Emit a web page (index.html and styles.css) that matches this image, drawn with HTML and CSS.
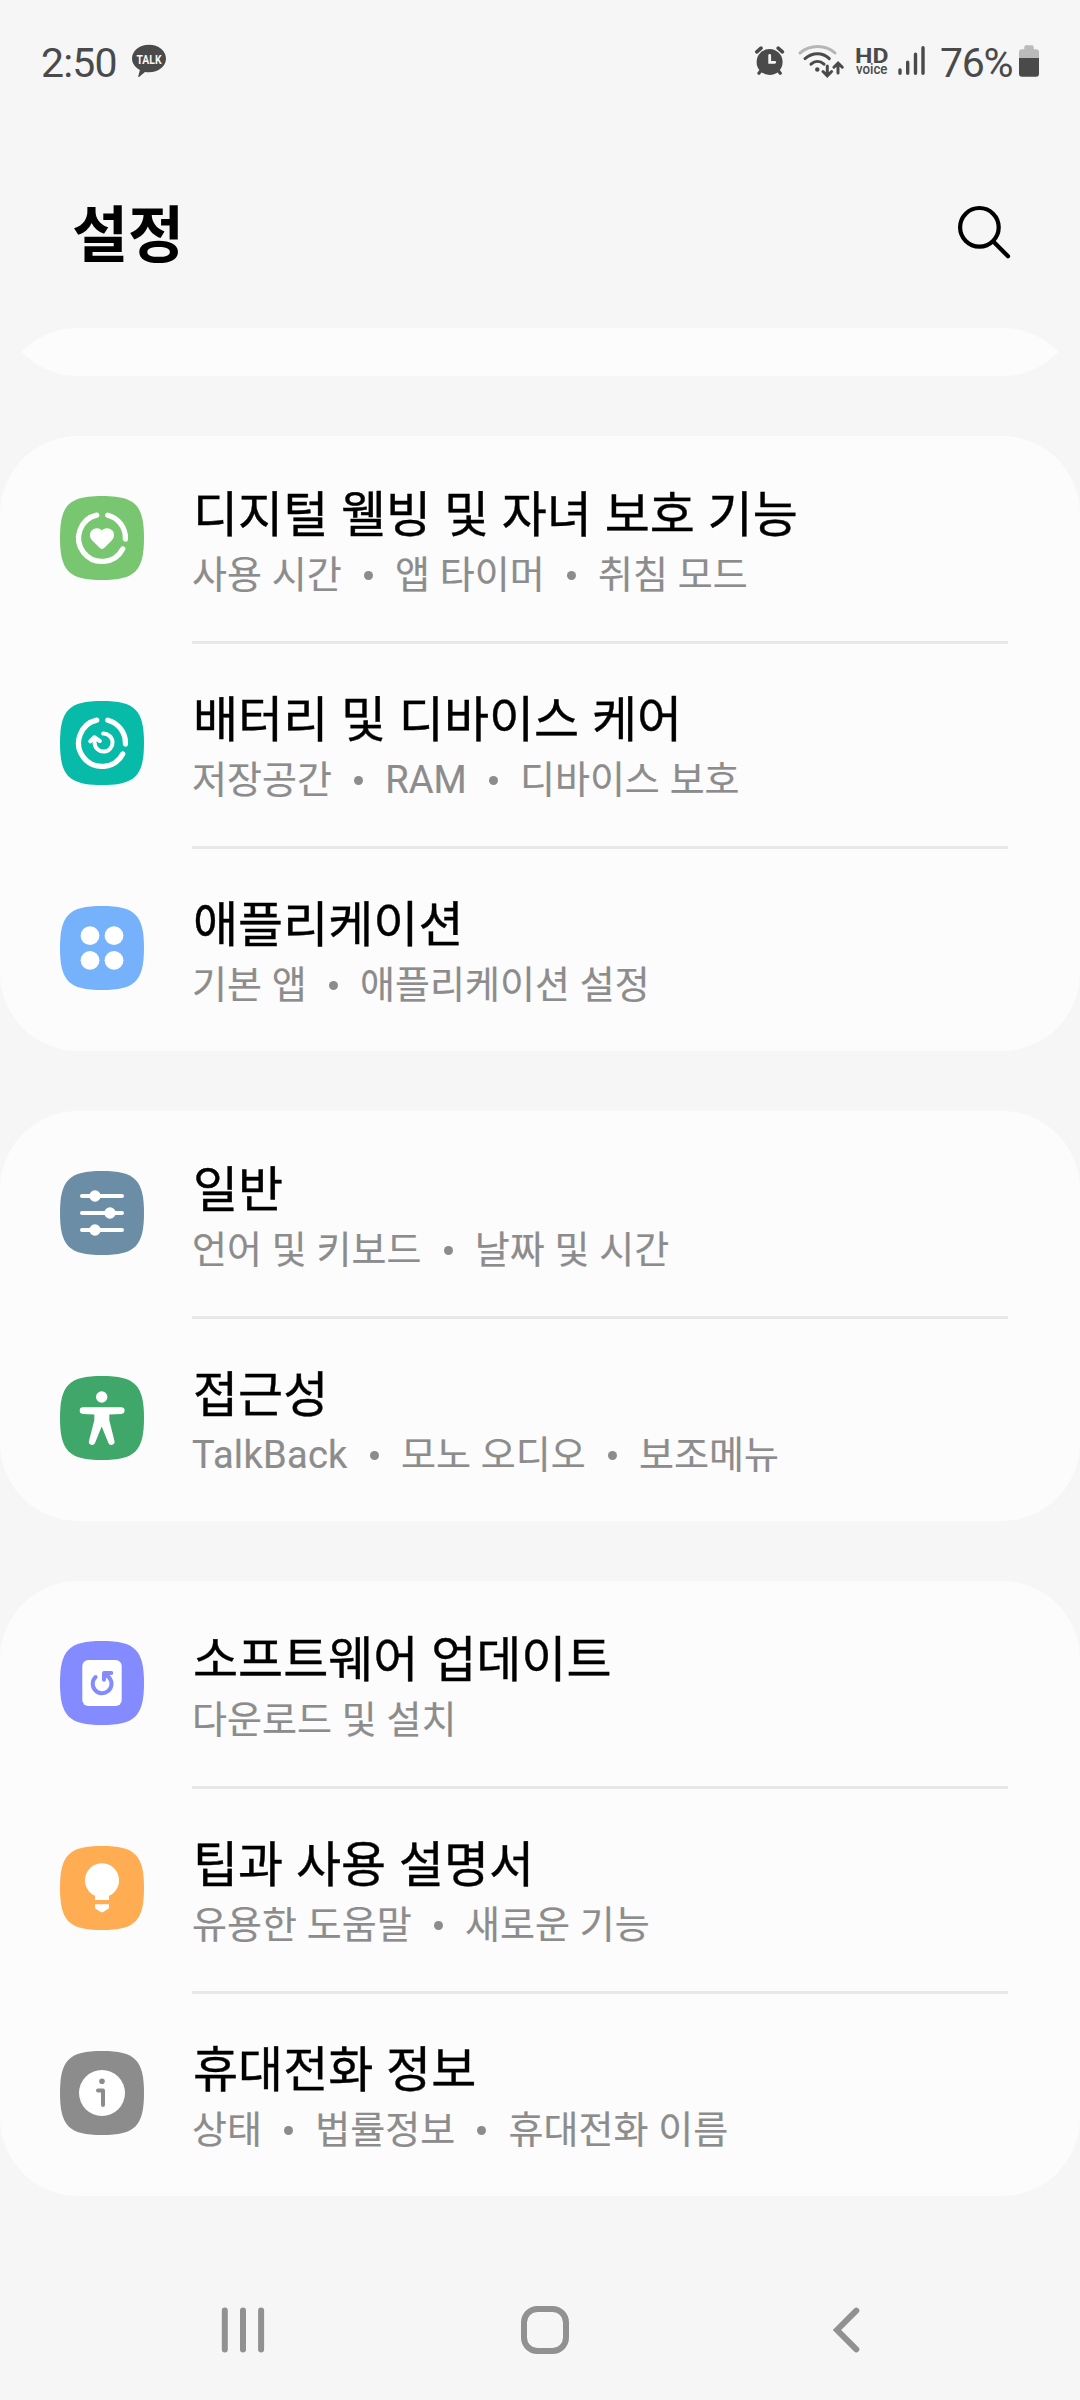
FILE: index.html
```html
<!DOCTYPE html>
<html lang="ko">
<head>
<meta charset="utf-8">
<title>설정</title>
<link rel="stylesheet" href="styles.css">
</head>
<body>
<div class="screen">
  <div class="status-bar">
    <span class="clock">2:50</span>
    <svg class="talk" width="36" height="40" viewBox="131 40 36 40"><path d="M149 44.7c9.5 0 17 6.100 17 13.800s-7.500 13.800-17 13.800c-1.500 0-2.600-.1-4-.4L139 77c-.6.300-1 0-.8-.6l1.700-6.400c-4.800-2.600-7.900-6.800-7.900-11.500 0-7.700 7.500-13.800 17-13.800z" fill="#4a4a4a"/><text class="talk-text" x="149" y="63.600" text-anchor="middle" textLength="25" lengthAdjust="spacingAndGlyphs">TALK</text></svg>
    <div class="indicators">
      <svg width="32" height="40" viewBox="754 40 32 40" fill="none" stroke="#4a4a4a" stroke-linecap="round"><circle cx="769.600" cy="62" r="13" fill="#4a4a4a" stroke="none"/><path d="M756.800 51.800l4.200-3.600M782.400 51.800l-4.200-3.600" stroke-width="3.600"/><path d="M761.500 70l-2.600 3.300M777.700 70l2.600 3.300" stroke-width="3.200"/><path d="M769.700 55.500v6.800h5" stroke="#f6f6f6" stroke-width="2.800"/></svg>
      <svg class="wifi" width="48" height="40" viewBox="797 40 48 40" fill="none" stroke="#4a4a4a" stroke-width="3" stroke-linecap="round"><path d="M800 53c10-8.600 25.500-8.600 35 0" stroke="#b6b6b6"/><path d="M805 58.600c7.500-6.600 17.500-6.600 24.300 0M811 64.200c4-3.600 9-3.600 13 0"/><circle cx="817.300" cy="69.500" r="2.200" fill="#4a4a4a" stroke="none"/><path d="M827.300 66v9.500M823 71.500l4.300 4.300 4.300-4.300M838 73v-9.500M833.900 67.200l4.200-4.200 4.200 4.200"/></svg>
      <svg class="volte" width="34" height="40" viewBox="855 40 34 40"><text class="hd" x="855" y="62.600" textLength="33.500" lengthAdjust="spacingAndGlyphs">HD</text><text class="voice" x="856" y="73.800" textLength="31.500" lengthAdjust="spacingAndGlyphs">voice</text></svg>
      <svg class="signal" width="28" height="40" viewBox="898 40 28 40" stroke="#4a4a4a" stroke-width="3.400" stroke-linecap="round"><path d="M900 70v3.300M907.700 62.300v11M915.500 54.300v19M923 47.700v25.600"/></svg>
      <span class="percent">76%</span>
      <svg class="battery" width="22" height="40" viewBox="1018 40 22 40"><path d="M1026 45.300h6q1.700 0 1.700 1.700v2.300h2.300q3 0 3 3V58h-20v-5.700q0-3 3-3h2.300V47q0-1.700 1.700-1.700z" fill="#bababa"/><path d="M1019 58h20v15.700q0 3-3 3h-14q-3 0-3-3z" fill="#4a4a4a"/></svg>
    </div>
  </div>

  <header class="app-bar">
    <h1>설정</h1>
    <svg width="60" height="60" viewBox="954 200 60 60" fill="none" stroke="#000" stroke-width="4.200" stroke-linecap="round"><circle cx="979.400" cy="227.300" r="19.300"/><path d="M993.300 241.500l14.700 14.800"/></svg>
  </header>

  <main class="list">
    <section class="card-edge"></section>

    <section class="card">
      <div class="row">
        <svg class="icon wellbeing" viewBox="0 0 84 84"><path class="tile" d="M0 42C0 9 9 0 42 0s42 9 42 42-9 42-42 42S0 75 0 42z"/><path class="line ring" d="M36.700 19.200A23.400 23.400 0 1 0 62.700 52.900M47.800 19.200A23.400 23.400 0 0 1 65.400 43"/><path class="solid" d="M42 53c-1 0-1.700-.5-2.400-1.200l-7.300-7.300c-3-3.100-3.100-7.400-.4-10.200 2.800-2.900 7.500-2.900 10.100.3 2.600-3.200 7.300-3.200 10.100-.3 2.700 2.800 2.600 7.100-.4 10.200l-7.300 7.300c-.7.700-1.400 1.200-2.400 1.200z"/></svg>
        <div class="text"><div class="title">디지털 웰빙 및 자녀 보호 기능</div><div class="sub">사용 시간<i></i>앱 타이머<i></i>취침 모드</div></div>
      </div>
      <div class="row">
        <svg class="icon care" viewBox="0 0 84 84"><path class="tile" d="M0 42C0 9 9 0 42 0s42 9 42 42-9 42-42 42S0 75 0 42z"/><path class="line ring" d="M36.700 19.200A23.400 23.400 0 1 0 62.700 52.900M47.800 19.200A23.400 23.400 0 0 1 65.400 43"/><path class="line" stroke-width="4" d="M43.200 32.600A9 9 0 1 1 34.600 42.500L34.300 37M30.200 40.400L34.300 36.200L39.800 40"/></svg>
        <div class="text"><div class="title">배터리 및 디바이스 케어</div><div class="sub">저장공간<i></i>RAM<i></i>디바이스 보호</div></div>
      </div>
      <div class="row">
        <svg class="icon apps" viewBox="0 0 84 84"><path class="tile" d="M0 42C0 9 9 0 42 0s42 9 42 42-9 42-42 42S0 75 0 42z"/><g class="solid"><circle cx="30" cy="29.700" r="9.400"/><circle cx="54" cy="29.700" r="9.400"/><circle cx="30" cy="54.300" r="9.400"/><circle cx="54" cy="54.300" r="9.400"/></g></svg>
        <div class="text"><div class="title">애플리케이션</div><div class="sub">기본 앱<i></i>애플리케이션 설정</div></div>
      </div>
    </section>

    <section class="card">
      <div class="row">
        <svg class="icon general" viewBox="0 0 84 84"><path class="tile" d="M0 42C0 9 9 0 42 0s42 9 42 42-9 42-42 42S0 75 0 42z"/><path class="line" stroke-width="4" d="M22 25h40M22 42h40M22 59h40"/><g class="solid"><circle cx="35" cy="25" r="5.700"/><circle cx="50" cy="42" r="5.700"/><circle cx="35" cy="59" r="5.700"/></g></svg>
        <div class="text"><div class="title">일반</div><div class="sub">언어 및 키보드<i></i>날짜 및 시간</div></div>
      </div>
      <div class="row">
        <svg class="icon access" viewBox="0 0 84 84"><path class="tile" d="M0 42C0 9 9 0 42 0s42 9 42 42-9 42-42 42S0 75 0 42z"/><g class="solid"><circle cx="41.700" cy="21" r="5.700"/><path d="M23 31.300h38.300a3.300 3.300 0 0 1 0 6.600l-12 .7v5.700l5.100 20.400a3.200 3.200 0 0 1-6 2.200L41.700 50.500 35 66.900a3.200 3.200 0 0 1-6-2.200l5.300-20.400v-5.700l-11.300-.7a3.300 3.300 0 0 1 0-6.600z"/></g></svg>
        <div class="text"><div class="title">접근성</div><div class="sub"><span class="latin">TalkBack</span><i></i>모노 오디오<i></i>보조메뉴</div></div>
      </div>
    </section>

    <section class="card">
      <div class="row">
        <svg class="icon update" viewBox="0 0 84 84"><path class="tile" d="M0 42C0 9 9 0 42 0s42 9 42 42-9 42-42 42S0 75 0 42z"/><rect class="solid" x="22.300" y="19" width="39.400" height="46" rx="6"/><path class="cut" stroke-width="4" d="M35.600 36A9.400 9.400 0 1 0 49.500 37L45.500 33M51.300 31.900H44V38.800"/></svg>
        <div class="text"><div class="title">소프트웨어 업데이트</div><div class="sub">다운로드 및 설치</div></div>
      </div>
      <div class="row">
        <svg class="icon tips" viewBox="0 0 84 84"><path class="tile" d="M0 42C0 9 9 0 42 0s42 9 42 42-9 42-42 42S0 75 0 42z"/><path class="solid" d="M42 17.300a17 17 0 0 1 7 32.500V54H35v-4.200a17 17 0 0 1 7-32.500zM35 58.300h14v3.900l-5.300 3.600q-1.700 1-3.400 0L35 62.200z"/></svg>
        <div class="text"><div class="title">팁과 사용 설명서</div><div class="sub">유용한 도움말<i></i>새로운 기능</div></div>
      </div>
      <div class="row">
        <svg class="icon about" viewBox="0 0 84 84"><path class="tile" d="M0 42C0 9 9 0 42 0s42 9 42 42-9 42-42 42S0 75 0 42z"/><circle class="solid" cx="42" cy="42" r="23"/><circle cx="42" cy="30.300" r="2.800" fill="#8c8c8c"/><path class="cut" stroke-width="4" d="M38 39.600h5v14.400"/></svg>
        <div class="text"><div class="title">휴대전화 정보</div><div class="sub">상태<i></i>법률정보<i></i>휴대전화 이름</div></div>
      </div>
    </section>
  </main>

  <nav class="nav-bar">
    <svg width="60" height="60" viewBox="213 2300 60 60"><path d="M224.800 2310.500v39M243 2310.500v39M261.100 2310.500v39"/></svg>
    <svg width="60" height="60" viewBox="515 2300 60 60"><rect x="524" y="2309" width="42" height="42" rx="13.500"/></svg>
    <svg width="60" height="60" viewBox="818 2300 60 60"><path d="M857.300 2310.600L838 2330l19.300 19.400"/></svg>
  </nav>
</div>
</body>
</html>
```
FILE: styles.css
```css
* { box-sizing: border-box; }

body {
  margin: 0;
  background: #f6f6f6;
  font-family: Roboto, "Noto Sans CJK KR", sans-serif;
}

svg { display: block; flex: none; }

.screen {
  width: 1080px;
  height: 2400px;
  display: flex;
  flex-direction: column;
  overflow: hidden;
}

/* Status bar */
.status-bar {
  height: 120px;
  display: flex;
  align-items: center;
  padding: 0 40px 0 41px;
  color: #4a4a4a;
}

.clock,
.percent {
  font-size: 41px;
  line-height: 48px;
  padding-top: 5px;
  white-space: nowrap;
}

.clock { width: 90px; letter-spacing: -0.8px; }

.talk-text {
  font: 700 12.500px Roboto, sans-serif;
  fill: #f6f6f6;
}

.indicators {
  display: flex;
  align-items: center;
  margin-left: auto;
}

.wifi { margin-left: 11px; }
.volte { margin-left: 10px; }
.signal { margin-left: 9px; }
.percent { width: 76px; margin-left: 14px; letter-spacing: -1.300px; }
.battery { margin-left: 2px; }

.hd { font: 700 20.500px Roboto, sans-serif; fill: #4a4a4a; }
.voice { font: 500 14px Roboto, sans-serif; fill: #4a4a4a; }

/* Title and search */
.app-bar {
  height: 208px;
  display: flex;
  align-items: center;
  justify-content: space-between;
  padding: 24px 66px 0 72px;
}

.app-bar h1 {
  margin: 0;
  font-size: 61px;
  line-height: 80px;
  font-weight: 700;
  color: #000;
}

.app-bar svg { margin-bottom: 12px; }

/* Cards */
.list {
  display: flex;
  flex-direction: column;
  gap: 60px;
}

.card-edge {
  height: 48px;
  background: #fcfcfc;
  clip-path: path("M78 0H1002A78 78 0 0 1 1058.300 24A78 78 0 0 1 1002 48H78A78 78 0 0 1 21.700 24A78 78 0 0 1 78 0Z");
}

.card {
  background: #fcfcfc;
  border-radius: 78px;
}

.row {
  height: 205px;
  display: flex;
  padding: 0 72px 0 60px;
}

.icon {
  width: 84px;
  height: 84px;
  margin-top: 60px;
}

.text {
  flex: 1;
  margin-left: 48px;
  padding-top: 50px;
  border-top: 3px solid transparent;
}

.row + .row .text { border-top-color: #e8e8e8; }

.title {
  margin-top: -3px;
  padding-left: 1px;
  font-size: 49px;
  line-height: 60px;
  word-spacing: 0.600px;
  color: #000;
  -webkit-text-stroke: 0.400px #000;
  white-space: nowrap;
}

.sub {
  display: flex;
  align-items: center;
  margin-top: 4px;
  font-size: 38px;
  line-height: 50px;
  word-spacing: 0.400px;
  color: #8c8c8c;
  -webkit-text-stroke: 0.200px #8c8c8c;
  white-space: nowrap;
}

.sub i {
  width: 9px;
  height: 9px;
  margin: 0 22.200px;
  border-radius: 50%;
  background: #8c8c8c;
}

.latin { letter-spacing: 0.300px; }

/* Icon parts */
.solid { fill: #fff; }
.line { fill: none; stroke: #fff; stroke-linecap: round; stroke-linejoin: round; }
.ring { stroke-width: 5.300px; }
.cut { fill: none; stroke-linecap: round; stroke-linejoin: round; }

.wellbeing .tile { fill: #79c671; }
.care .tile { fill: #07bba8; }
.apps .tile { fill: #76b2fb; }
.general .tile { fill: #6c8da6; }
.access .tile { fill: #3fa769; }
.update .tile { fill: #838bff; }
.update .cut { stroke: #838bff; }
.tips .tile { fill: #ffac52; }
.about .tile { fill: #8c8c8c; }
.about .cut { stroke: #8c8c8c; }

/* Navigation */
.nav-bar {
  height: 140px;
  margin-top: auto;
  display: flex;
  gap: 242px;
  align-items: center;
  padding-left: 213px;
}

.nav-bar svg {
  fill: none;
  stroke: #919191;
  stroke-width: 6px;
  stroke-linecap: round;
}
```
